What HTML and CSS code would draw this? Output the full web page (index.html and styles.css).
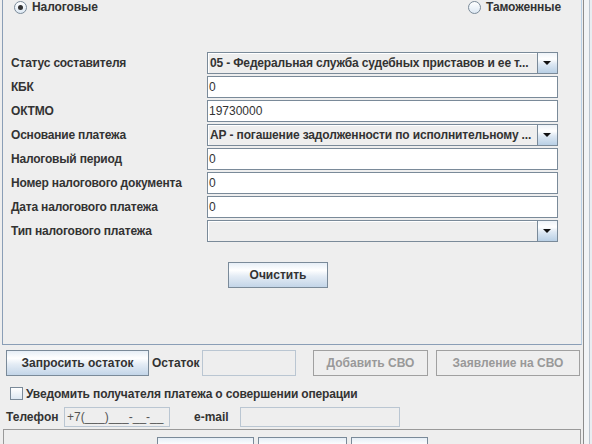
FILE: index.html
```html
<!DOCTYPE html>
<html lang="ru">
<head>
    <meta charset="UTF-8">
    <title>Платёж</title>
    <link rel="stylesheet" href="styles.css">
</head>
<body>
<div class="frame">
    <div class="main">

        <div class="tax-panel">
            <div class="radio-row">
                <label class="radio checked"><span class="radio-dot"></span>Налоговые</label>
                <label class="radio"><span class="radio-dot"></span>Таможенные</label>
            </div>

            <div class="form">
                <div class="row">
                    <span class="label">Статус составителя</span>
                    <div class="combo"><span class="combo-text">05 - Федеральная служба судебных приставов и ее т...</span><span class="combo-arrow"></span></div>
                </div>
                <div class="row">
                    <span class="label">КБК</span>
                    <div class="field">0</div>
                </div>
                <div class="row">
                    <span class="label">ОКТМО</span>
                    <div class="field">19730000</div>
                </div>
                <div class="row">
                    <span class="label">Основание платежа</span>
                    <div class="combo"><span class="combo-text">АР - погашение задолженности по исполнительному ...</span><span class="combo-arrow"></span></div>
                </div>
                <div class="row">
                    <span class="label">Налоговый период</span>
                    <div class="field">0</div>
                </div>
                <div class="row">
                    <span class="label">Номер налогового документа</span>
                    <div class="field">0</div>
                </div>
                <div class="row">
                    <span class="label">Дата налогового платежа</span>
                    <div class="field">0</div>
                </div>
                <div class="row">
                    <span class="label">Тип налогового платежа</span>
                    <div class="combo"><span class="combo-text"></span><span class="combo-arrow"></span></div>
                </div>
            </div>

            <div class="clear-row">
                <button class="btn btn-clear">Очистить</button>
            </div>
        </div>

        <div class="balance-row">
            <button class="btn btn-balance">Запросить остаток</button>
            <span class="balance-label">Остаток</span>
            <div class="field-off balance-field"></div>
            <button class="btn btn-off btn-add">Добавить СВО</button>
            <button class="btn btn-off btn-claim">Заявление на СВО</button>
        </div>

        <div class="notify-row">
            <span class="checkbox"></span>
            <span>Уведомить получателя платежа о совершении операции</span>
        </div>

        <div class="phone-row">
            <span class="phone-label">Телефон</span>
            <div class="field-off phone-field">+7(___)___-__-__</div>
            <span class="email-label">e-mail</span>
            <div class="field-off email-field"></div>
        </div>

        <div class="bottom-panel">
            <button class="btn btn-b1"></button>
            <button class="btn btn-b2"></button>
            <button class="btn btn-b3"></button>
        </div>

    </div>
    <div class="side"></div>
</div>
</body>
</html>
```

FILE: styles.css
```css
* {
    box-sizing: border-box;
}

body {
    margin: 0;
    width: 592px;
    height: 444px;
    overflow: hidden;
    background-color: #eeeeee;
    font-family: "Liberation Sans", Arial, sans-serif;
    font-size: 12px;
    color: #333333;
}

.frame {
    display: flex;
    height: 444px;
}

.main {
    width: 584px;
    padding-left: 2px;
    border-right: 1px solid #8c8c8c;
}

.side {
    flex: 1;
    background: linear-gradient(to right, #f2f4f6 0 5px, #b9c3cd 5px 6px, #e9edf1 6px);
}

/* upper panel */
.tax-panel {
    width: 580px;
    height: 345px;
    border: 1px solid #8a9eb6;
    border-top: none;
    border-right-color: #b8cfe5;
}

.radio-row {
    display: flex;
    justify-content: space-between;
    height: 14px;
    padding: 0 20px 0 11px;
}

.radio {
    display: flex;
    align-items: center;
    gap: 5px;
    font-weight: bold;
    line-height: 14px;
    letter-spacing: -0.1px;
}

.radio-dot {
    position: relative;
    width: 13px;
    height: 13px;
    border-radius: 50%;
    border: 1px solid #7a8a99;
    background: linear-gradient(#ffffff, #dde8f3);
}

.radio.checked .radio-dot::after {
    content: "";
    position: absolute;
    left: 3px;
    top: 3px;
    width: 5px;
    height: 5px;
    border-radius: 50%;
    background-color: #333333;
}

.form {
    display: flex;
    flex-direction: column;
    gap: 2px;
    margin-top: 38px;
    padding-left: 8px;
}

.row {
    display: flex;
    align-items: center;
    height: 22px;
}

.label {
    width: 196px;
    font-weight: bold;
    letter-spacing: -0.2px;
}

.field {
    width: 351px;
    height: 22px;
    border: 1px solid #7a8a99;
    background-color: white;
    padding-left: 1px;
    line-height: 20px;
}

.combo {
    display: flex;
    width: 351px;
    height: 22px;
    border: 1px solid #7a8a99;
    background-color: #eeeeee;
    box-shadow: inset 1px 1px 0 #ffffff;
}

.combo-text {
    flex: 1;
    padding-left: 2px;
    font-weight: bold;
    line-height: 20px;
    letter-spacing: -0.15px;
    white-space: nowrap;
    overflow: hidden;
}

.combo-arrow {
    position: relative;
    width: 20px;
    border-left: 1px solid #7a8a99;
    background: linear-gradient(#eef3f8, #ffffff 30%, #dde8f3 55%, #b8cfe5);
}

.combo-arrow::after {
    content: "";
    position: absolute;
    left: 5px;
    top: 8px;
    border-left: 4px solid transparent;
    border-right: 4px solid transparent;
    border-top: 4px solid #111111;
}

.clear-row {
    margin-top: 20px;
    padding-left: 225px;
}

/* buttons */
.btn {
    height: 26px;
    padding: 0;
    border: 1px solid #7a8a99;
    background: linear-gradient(#e6eef6, #ffffff 30%, #e4ecf5 55%, #c3d5e8);
    font-family: inherit;
    font-size: 12px;
    font-weight: bold;
    color: #333333;
}

.btn-clear {
    width: 100px;
}

.btn-off {
    border-color: #a0a0a0;
    background: #eeeeee;
    color: #999999;
}

/* lower part */
.balance-row {
    display: flex;
    align-items: center;
    height: 26px;
    margin-top: 5px;
    padding-left: 4px;
}

.btn-balance {
    width: 143px;
}

.balance-label {
    width: 50px;
    margin-left: 3px;
    font-weight: bold;
}

.field-off {
    border: 1px solid #bac6d2;
    background-color: #eeeeee;
}

.balance-field {
    width: 94px;
    height: 26px;
}

.btn-add {
    width: 115px;
    margin-left: 17px;
}

.btn-claim {
    width: 144px;
    margin-left: 8px;
}

.notify-row {
    display: flex;
    align-items: center;
    gap: 3px;
    height: 13px;
    margin-top: 11px;
    padding-left: 8px;
    font-weight: bold;
    letter-spacing: -0.15px;
}

.checkbox {
    width: 13px;
    height: 13px;
    border: 1px solid #7a8a99;
    background: linear-gradient(#ffffff, #dde8f3);
}

.phone-row {
    display: flex;
    align-items: center;
    height: 20px;
    margin-top: 7px;
    padding-left: 4px;
    font-weight: bold;
}

.phone-label {
    width: 58px;
}

.phone-field {
    width: 106px;
    height: 20px;
    padding-left: 2px;
    line-height: 18px;
    font-weight: normal;
    color: #555555;
}

.email-label {
    width: 46px;
    margin-left: 24px;
}

.email-field {
    width: 160px;
    height: 20px;
}

.bottom-panel {
    display: flex;
    gap: 4px;
    width: 578px;
    height: 15px;
    margin-top: 2px;
    margin-left: 1px;
    padding: 7px 0 0 153px;
    border: 1px solid #999999;
    border-bottom: none;
    overflow: hidden;
}

.btn-b1 {
    width: 97px;
    flex-shrink: 0;
}

.btn-b2 {
    width: 89px;
    flex-shrink: 0;
}

.btn-b3 {
    width: 77px;
    flex-shrink: 0;
}
```
